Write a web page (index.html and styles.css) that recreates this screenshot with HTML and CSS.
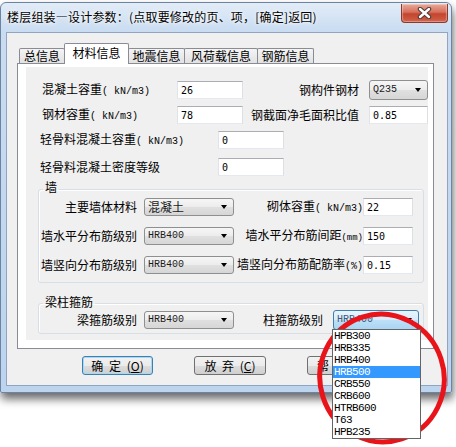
FILE: index.html
```html
<!DOCTYPE html>
<html lang="zh-CN">
<head>
    <meta charset="UTF-8">
    <title>楼层组装—设计参数</title>
    <link rel="stylesheet" href="styles.css">
</head>
<body>
    <div class="window">
        <div class="titlebar">
            <span class="title">楼层组装—设计参数：(点取要修改的页、项，[确定]返回)</span>
            <div class="close">
                <svg width="15" height="12" viewBox="0 0 15 12">
                    <path d="M3 2 L12 10 M12 2 L3 10" stroke="#4a3a3a" stroke-width="4.4" stroke-linecap="round"/>
                    <path d="M3 2 L12 10 M12 2 L3 10" stroke="#fff" stroke-width="2.4" stroke-linecap="round"/>
                </svg>
            </div>
        </div>

        <div class="client">
            <div class="tabs">
                <div class="tab t1">总信息</div>
                <div class="tab t2 active">材料信息</div>
                <div class="tab t3">地震信息</div>
                <div class="tab t4">风荷载信息</div>
                <div class="tab t5">钢筋信息</div>
            </div>

            <div class="panel">
                <div class="sheet">
                    <div class="row r1">
                        <span class="lbl w135">混凝土容重<span class="unit">( kN/m3)</span></span>
                        <input class="edit w66" value="26">
                        <span class="lbl right w126">钢构件钢材</span>
                        <div class="combo tall w59"><span class="val">Q235</span></div>
                    </div>
                    <div class="row r2">
                        <span class="lbl w135">钢材容重<span class="unit">( kN/m3)</span></span>
                        <input class="edit w66" value="78">
                        <span class="lbl right w126">钢截面净毛面积比值</span>
                        <input class="edit w59" value="0.85">
                    </div>
                    <div class="row r3">
                        <span class="lbl w178">轻骨料混凝土容重<span class="unit">( kN/m3)</span></span>
                        <input class="edit w66" value="0">
                    </div>
                    <div class="row r4">
                        <span class="lbl w178">轻骨料混凝土密度等级</span>
                        <input class="edit w66" value="0">
                    </div>

                    <fieldset class="group wall">
                        <legend>墙</legend>
                        <div class="grow">
                            <span class="lbl right w98">主要墙体材料</span>
                            <div class="combo w90 gap7"><span class="val cn">混凝土</span></div>
                            <span class="lbl right w129">砌体容重<span class="unit">( kN/m3)</span></span>
                            <input class="edit w50 gap5" value="22">
                        </div>
                        <div class="grow">
                            <span class="lbl right w98">墙水平分布筋级别</span>
                            <div class="combo w90 gap7"><span class="val">HRB400</span></div>
                            <span class="lbl right w129">墙水平分布筋间距<span class="unit small">(mm)</span></span>
                            <input class="edit w50 gap5" value="150">
                        </div>
                        <div class="grow">
                            <span class="lbl right w98">墙竖向分布筋级别</span>
                            <div class="combo w90 gap7"><span class="val">HRB400</span></div>
                            <span class="lbl right w129">墙竖向分布筋配筋率<span class="unit">(%)</span></span>
                            <input class="edit w50 gap5" value="0.15">
                        </div>
                    </fieldset>

                    <fieldset class="group beam">
                        <legend>梁柱箍筋</legend>
                        <div class="grow">
                            <span class="lbl right w98">梁箍筋级别</span>
                            <div class="combo w90 gap7"><span class="val">HRB400</span></div>
                            <span class="lbl right w89">柱箍筋级别</span>
                            <div class="combo open w86 gap10">
                                <span class="val">HRB400</span>
                                <ul class="droplist">
                                    <li>HPB300</li>
                                    <li>HRB335</li>
                                    <li>HRB400</li>
                                    <li class="sel">HRB500</li>
                                    <li>CRB550</li>
                                    <li>CRB600</li>
                                    <li>HTRB600</li>
                                    <li>T63</li>
                                    <li>HPB235</li>
                                </ul>
                            </div>
                        </div>
                    </fieldset>
                </div>
            </div>

            <div class="buttons">
                <button class="btn default">确 定 (<u>O</u>)</button>
                <button class="btn">放 弃 (<u>C</u>)</button>
                <button class="btn help">帮 助 (<u>H</u>)</button>
            </div>
        </div>
    </div>

    <!-- red marker drawn over the screenshot -->
    <svg class="mark" width="144" height="144" viewBox="0 0 144 144">
        <ellipse cx="71" cy="72" rx="62" ry="64" transform="rotate(-18 71 72)" fill="none" stroke="#e8141a" stroke-width="5"/>
    </svg>
</body>
</html>
```

FILE: styles.css
```css
* {
    box-sizing: border-box;
}

body {
    margin: 0;
    position: relative;
    height: 447px;
    overflow: hidden;
    background-color: #fff;
    font-family: "Noto Sans CJK SC", "Liberation Sans", sans-serif;
    font-size: 12px;
    color: #000;
}

/* window frame */
.window {
    width: 452px;
    margin-top: 2px;
    padding: 0 3px 6px 5px;
    border: 1px solid #6c83a2;
    border-radius: 6px 6px 2px 2px;
    background: linear-gradient(#e2ecf7, #c9dcf1 28px, #bcd4ee);
    box-shadow: 1px 6px 10px rgba(0, 0, 0, 0.6);
}

.titlebar {
    height: 29px;
    display: flex;
    align-items: flex-start;
}

.title {
    margin-top: 7px;
    padding-left: 1px;
    line-height: 14px;
    letter-spacing: 0.2px;
    white-space: nowrap;
    text-shadow: 0 0 6px #fff, 0 0 3px #fff;
}

.close {
    margin-left: auto;
    margin-top: 1px;
    width: 47px;
    height: 19px;
    display: flex;
    align-items: center;
    justify-content: center;
    border: 1px solid #8a3a2c;
    border-top: none;
    border-radius: 0 0 4px 4px;
    background: linear-gradient(#e9a897, #d6705c 45%, #c4452c 55%, #d2604a);
    box-shadow: inset 0 0 1px 1px rgba(255, 255, 255, 0.35);
}

.client {
    height: 354px;
    padding: 10px 0 0 10px;
    border: 1px solid #8fa5c1;
    background-color: #f0f0f0;
}

/* tab strip */
.tabs {
    height: 20px;
    margin-left: 2px;
    display: flex;
    align-items: flex-end;
    position: relative;
    z-index: 1;
}

.tab {
    height: 15px;
    margin-left: -1px;
    display: flex;
    align-items: center;
    justify-content: center;
    border: 1px solid #898c95;
    border-bottom: none;
    border-radius: 2px 2px 0 0;
    background: linear-gradient(#f4f4f4, #e2e2e2);
    line-height: 12px;
    white-space: nowrap;
}

.tab.active {
    height: 21px;
    margin-bottom: -1px;
    padding-bottom: 3px;
    position: relative;
    z-index: 2;
    background: #fff;
}

.t1 { width: 46px; margin-left: 0; }
.t2 { width: 65px; }
.t3 { width: 57px; }
.t4 { width: 74px; }
.t5 { width: 57px; }

.panel {
    width: 417px;
    height: 286px;
    padding: 3px 5px 8px 8px;
    border: 1px solid #898c95;
    background-color: #fff;
}

.sheet {
    height: 100%;
    padding-top: 13px;
    background-color: #f0f0f0;
}

/* form rows */
.row {
    height: 20px;
    display: flex;
    align-items: center;
}

.r1, .r2 { padding-left: 16px; }
.r3, .r4 { padding-left: 14px; }
.r2, .r3 { margin-top: 5px; }
.r4 { margin-top: 7px; }

.lbl {
    line-height: 14px;
    white-space: nowrap;
}

.lbl.right {
    text-align: right;
}

.r1 .lbl.right, .r2 .lbl.right {
    padding-right: 10px;
}

.unit {
    font-family: "Liberation Mono", monospace;
    font-size: 10px;
}

.unit.small {
    font-size: 9px;
}

.w50 { width: 50px; }
.w59 { width: 59px; }
.w66 { width: 66px; }
.w86 { width: 86px; }
.w89 { width: 89px; }
.w90 { width: 90px; }
.w98 { width: 98px; }
.w126 { width: 126px; }
.w129 { width: 129px; }
.w135 { width: 135px; }
.w178 { width: 178px; }

.gap5 { margin-left: 5px; }
.gap7 { margin-left: 7px; }
.gap10 { margin-left: 10px; }

.edit {
    height: 18px;
    margin: 0;
    padding: 0 3px;
    border: 1px solid;
    border-color: #abadb3 #dbdfe6 #e3e9ef #e2e3ea;
    background-color: #fff;
    font-family: "DejaVu Sans Mono", monospace;
    font-size: 10px;
    color: #000;
    outline: none;
}

/* combo boxes */
.combo {
    height: 18px;
    position: relative;
    display: flex;
    align-items: center;
    padding-left: 3px;
    border: 1px solid #8e8f8f;
    border-radius: 3px;
    background: linear-gradient(#f6f6f6, #ececec 50%, #e0e0e0 51%, #d6d6d6);
}

.combo.tall {
    height: 20px;
}

.combo::after {
    content: "";
    position: absolute;
    right: 6px;
    top: 50%;
    margin-top: -2px;
    border-left: 3px solid transparent;
    border-right: 3px solid transparent;
    border-top: 4px solid #000;
}

.val {
    font-family: "Liberation Mono", monospace;
    font-size: 10px;
    line-height: 12px;
    color: #1a1a1a;
}

.val.cn {
    font-family: "Noto Sans CJK SC", sans-serif;
    font-size: 12px;
    line-height: 14px;
}

.combo.open {
    height: 20px;
    border-color: #3c7fb1;
    background: linear-gradient(#e8f4fc, #d6ebfa 50%, #bde0f8 51%, #a9d5f3);
}

.combo.open .val {
    color: #3a5a7a;
}

.droplist {
    position: absolute;
    top: 18px;
    left: -2px;
    width: 89px;
    margin: 0;
    padding: 0;
    list-style: none;
    border: 1px solid #646464;
    background-color: #fff;
    z-index: 5;
}

.droplist li {
    height: 12px;
    padding-left: 1px;
    font-family: "Liberation Mono", monospace;
    font-size: 11px;
    letter-spacing: -0.6px;
    line-height: 12px;
    color: #000;
}

.droplist li.sel {
    background-color: #3399ff;
    color: #fff;
}

/* group boxes */
.group {
    width: 386px;
    margin: 4px 0 0 12px;
    padding: 0 0 7px 0;
    border: 1px solid #d5dfe5;
    border-radius: 3px;
    box-shadow: inset 1px 1px 0 #fff;
}

.group legend {
    margin-left: 4px;
    padding: 0 2px 4px;
    line-height: 12px;
}

.grow {
    height: 20px;
    display: flex;
    align-items: center;
}

.grow + .grow {
    margin-top: 9px;
}

.group.beam {
    margin-top: 13px;
    padding-bottom: 4px;
}

.group.beam legend {
    padding-bottom: 2px;
}

.group.beam .grow {
    height: 19px;
}

/* dialog buttons */
.buttons {
    margin-top: 7px;
    padding-left: 65px;
    display: flex;
    gap: 41px;
}

.btn {
    width: 72px;
    height: 19px;
    padding: 0;
    border: 1px solid #707070;
    border-radius: 3px;
    background: linear-gradient(#f2f2f2, #ebebeb 50%, #dddddd 51%, #cfcfcf);
    font-family: "Noto Sans CJK SC", sans-serif;
    font-size: 12px;
    line-height: 14px;
    word-spacing: 3px;
    color: #000;
    white-space: nowrap;
}

.btn:first-child {
    width: 71px;
}

.btn.help {
    overflow: hidden;
}

.btn.default {
    border-color: #3c7fb1;
    box-shadow: inset 0 0 0 1px #a7d9f5;
}

.btn u {
    text-underline-offset: 1px;
}

.mark {
    position: absolute;
    left: 311px;
    top: 306px;
}
```
